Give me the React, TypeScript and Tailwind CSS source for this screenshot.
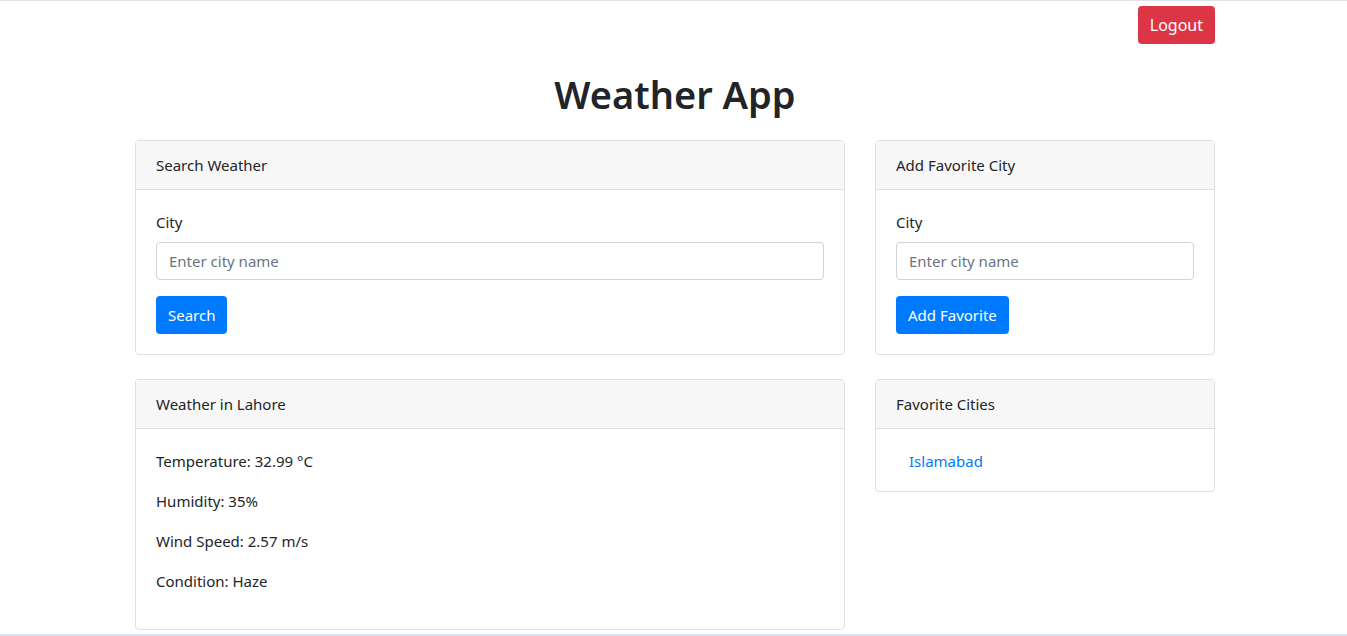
export default function App() {
  return (
    <div className="h-[636px] overflow-hidden flex flex-col bg-white border-t border-[#e4e0ea] text-[15px] leading-6 text-[#212529] font-['Noto_Sans',sans-serif]">
      <div className="flex-1 w-[1083px] mx-auto pl-[3px]">
        {/* top bar */}
        <div className="flex justify-end pt-[5px]">
          <button className="h-[38px] px-3 rounded bg-[#dc3545] text-white text-[16px]">Logout</button>
        </div>

        <h1 className="mt-[26px] text-center text-[38px] leading-[48px] font-semibold">Weather App</h1>

        <div className="mt-[22px] grid grid-cols-[710px_340px] gap-x-[30px] items-start">
          {/* left column */}
          <div className="flex flex-col gap-6">
            <div className="border border-[#dfdfdf] rounded">
              <div className="px-5 py-3 bg-[#f7f7f7] border-b border-[#dfdfdf]">Search Weather</div>
              <div className="p-5">
                <div className="mb-2">City</div>
                <input
                  className="block w-full h-[38px] px-3 border border-[#ced4da] rounded placeholder:text-[#6c757d] outline-none"
                  placeholder="Enter city name"
                />
                <button className="mt-4 h-[38px] px-3 rounded bg-[#007bff] text-white">Search</button>
              </div>
            </div>

            <div className="border border-[#dfdfdf] rounded">
              <div className="px-5 py-3 bg-[#f7f7f7] border-b border-[#dfdfdf]">Weather in Lahore</div>
              <div className="p-5">
                <p className="mb-4">Temperature: 32.99 °C</p>
                <p className="mb-4">Humidity: 35%</p>
                <p className="mb-4">Wind Speed: 2.57 m/s</p>
                <p className="mb-4">Condition: Haze</p>
              </div>
            </div>
          </div>

          {/* right column */}
          <div className="flex flex-col gap-6">
            <div className="border border-[#dfdfdf] rounded">
              <div className="px-5 py-3 bg-[#f7f7f7] border-b border-[#dfdfdf]">Add Favorite City</div>
              <div className="p-5">
                <div className="mb-2">City</div>
                <input
                  className="block w-full h-[38px] px-3 border border-[#ced4da] rounded placeholder:text-[#6c757d] outline-none"
                  placeholder="Enter city name"
                />
                <button className="mt-4 h-[38px] px-3 rounded bg-[#007bff] text-white">Add Favorite</button>
              </div>
            </div>

            <div className="border border-[#dfdfdf] rounded">
              <div className="px-5 py-3 bg-[#f7f7f7] border-b border-[#dfdfdf]">Favorite Cities</div>
              <ul className="pt-5 pb-[18px] pl-[33px] pr-5">
                <li>
                  <a href="#" className="text-[#007bff]">Islamabad</a>
                </li>
              </ul>
            </div>
          </div>
        </div>
      </div>
      <div className="h-[2px] bg-[#dde4f0]" />
    </div>
  )
}
